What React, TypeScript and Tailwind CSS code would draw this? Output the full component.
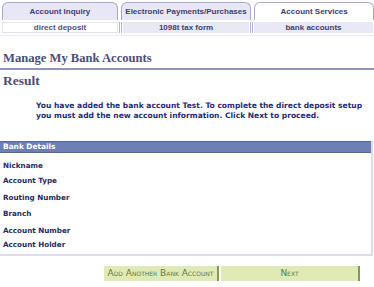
export default function App() {
  const tabs = [
    { label: "Account Inquiry", w: "w-[116px]", active: false },
    { label: "Electronic Payments/Purchases", w: "w-[131px]", active: false },
    { label: "Account Services", w: "w-[120px]", active: true },
  ];
  const labels = [
    { t: "Nickname", m: "mt-0" },
    { t: "Account Type", m: "mt-[5px]" },
    { t: "Routing Number", m: "mt-[7px]" },
    { t: "Branch", m: "mt-[6px]" },
    { t: "Account Number", m: "mt-[7px]" },
    { t: "Account Holder", m: "mt-[4px]" },
  ];
  return (
    <div className="w-[374px] h-[287px] bg-white overflow-hidden relative">
      {/* Tabs */}
      <div className="flex gap-[3px] pl-[2px] pt-[2px] h-[20px]">
        {tabs.map((t) => (
          <div
            key={t.label}
            className={`${t.w} h-[18px] rounded-t-[6px] border border-b-0 border-[#a9a9cf] flex items-center justify-center text-[8px] font-bold text-[#3d3d72] ${
              t.active ? "bg-white" : "bg-[#e7e7f6]"
            }`}
            style={{ fontFamily: "Arial, 'Liberation Sans', sans-serif" }}
          >
            {t.label}
          </div>
        ))}
      </div>
      {/* Sub tabs */}
      <div
        className="flex items-center h-[13px] mt-[1px] pl-[2px] text-[8px] font-bold text-[#5a4a86]"
        style={{ fontFamily: "Arial, 'Liberation Sans', sans-serif" }}
      >
        <div className="w-[116px] h-[11px] bg-white border border-[#e2e2ee] flex items-center justify-center">
          direct deposit
        </div>
        <div className="w-[5px] h-[11px] flex justify-center gap-[1px]">
          <div className="w-[1px] h-full bg-[#b4b4c8]" />
          <div className="w-[1px] h-full bg-[#b4b4c8]" />
        </div>
        <div className="w-[126px] h-[11px] bg-[#e9e9f6] flex items-center justify-center text-[#3d3d72]">
          1098t tax form
        </div>
        <div className="w-[5px] h-[11px] flex justify-center gap-[1px]">
          <div className="w-[1px] h-full bg-[#b4b4c8]" />
          <div className="w-[1px] h-full bg-[#b4b4c8]" />
        </div>
        <div className="w-[119px] h-[11px] bg-[#e9e9f6] flex items-center justify-center text-[#3d3d72]">
          bank accounts
        </div>
      </div>
      <div className="h-[1px] mt-[1px] bg-[#ececf4]" />

      {/* Heading */}
      <div
        className="mt-[15px] pl-[3px] text-[12.6px] font-bold text-[#4a4e7c] leading-[14px]"
        style={{ fontFamily: "'Liberation Serif', serif" }}
      >
        Manage My Bank Accounts
      </div>
      <div className="h-[2px] mt-[3px] bg-[#9094bd]" />
      <div
        className="mt-[3px] pl-[3px] text-[13.5px] font-bold text-[#4a4e7c] leading-[16px]"
        style={{ fontFamily: "'Liberation Serif', serif" }}
      >
        Result
      </div>
      <div
        className="mt-[12px] pl-[36px] pr-[4px] text-[7.55px] font-bold leading-[9.5px] text-[#1f2d75]"
        style={{ fontFamily: "'DejaVu Sans', Verdana, sans-serif" }}
      >
        You have added the bank account Test. To complete the direct deposit setup you must add the new
        account information. Click Next to proceed.
      </div>

      {/* Bank details */}
      <div className="mt-[21px] w-[373px] border-r-2 border-b-2 border-[#dcdde9]">
        <div
          className="h-[12px] bg-[#6d7fb4] border-y border-[#56669a] flex items-center pl-[3px] text-[7.4px] font-bold text-white"
          style={{ fontFamily: "'DejaVu Sans', Verdana, sans-serif" }}
        >
          Bank Details
        </div>
        <div
          className="pt-[8px] pb-[4px] pl-[3px] text-[7.2px] font-bold text-[#1f2d5f]"
          style={{ fontFamily: "'DejaVu Sans', Verdana, sans-serif" }}
        >
          {labels.map((l) => (
            <div key={l.t} className={`${l.m} h-[10px] flex items-center`}>
              {l.t}
            </div>
          ))}
        </div>
      </div>

      {/* Buttons */}
      <div className="flex gap-[2px] pl-[104px] mt-[10px]">
        <div
          className="w-[115px] h-[15px] bg-[#dfeab7] border-r-2 border-[#7aa04e] flex items-center justify-center text-[9px] text-[#5f7d3c]"
          style={{ fontFamily: "'DejaVu Sans', Verdana, sans-serif", fontVariant: "small-caps" }}
        >
          Add Another Bank Account
        </div>
        <div
          className="w-[139px] h-[15px] bg-[#dfeab7] border-r-2 border-[#7aa04e] flex items-center justify-center text-[9px] text-[#5f7d3c]"
          style={{ fontFamily: "'DejaVu Sans', Verdana, sans-serif", fontVariant: "small-caps" }}
        >
          Next
        </div>
      </div>
    </div>
  );
}
